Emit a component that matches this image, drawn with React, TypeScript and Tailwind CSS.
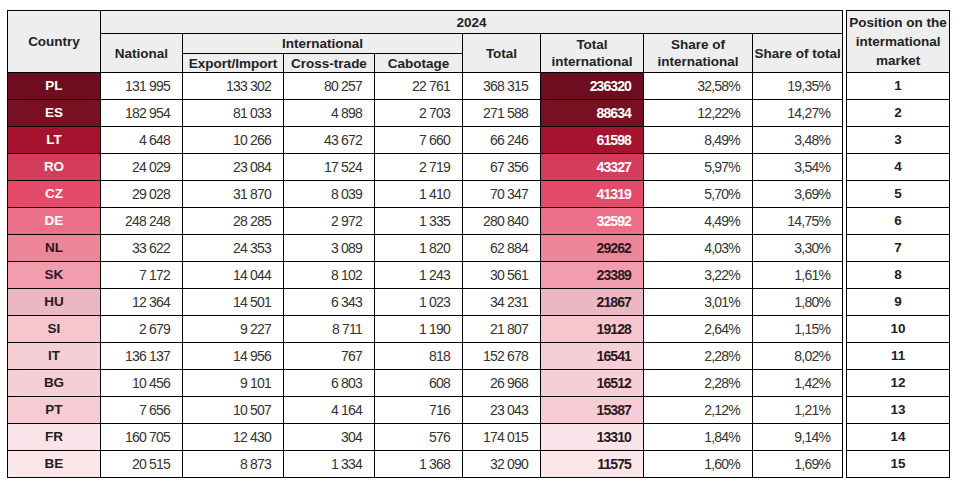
import React from "react";

type Row = {
  c: string;
  nat: string;
  exp: string;
  cross: string;
  cab: string;
  total: string;
  intl: string;
  shareIntl: string;
  shareTotal: string;
  bg: string;
  fg: string;
};

const rows: Row[] = [
  { c: "PL", nat: "131 995", exp: "133 302", cross: "80 257", cab: "22 761", total: "368 315", intl: "236320", shareIntl: "32,58%", shareTotal: "19,35%", bg: "bg-[#6d0d1f]", fg: "text-white" },
  { c: "ES", nat: "182 954", exp: "81 033", cross: "4 898", cab: "2 703", total: "271 588", intl: "88634", shareIntl: "12,22%", shareTotal: "14,27%", bg: "bg-[#780f22]", fg: "text-white" },
  { c: "LT", nat: "4 648", exp: "10 266", cross: "43 672", cab: "7 660", total: "66 246", intl: "61598", shareIntl: "8,49%", shareTotal: "3,48%", bg: "bg-[#a6132f]", fg: "text-white" },
  { c: "RO", nat: "24 029", exp: "23 084", cross: "17 524", cab: "2 719", total: "67 356", intl: "43327", shareIntl: "5,97%", shareTotal: "3,54%", bg: "bg-[#d33d5b]", fg: "text-white" },
  { c: "CZ", nat: "29 028", exp: "31 870", cross: "8 039", cab: "1 410", total: "70 347", intl: "41319", shareIntl: "5,70%", shareTotal: "3,69%", bg: "bg-[#e54b69]", fg: "text-white" },
  { c: "DE", nat: "248 248", exp: "28 285", cross: "2 972", cab: "1 335", total: "280 840", intl: "32592", shareIntl: "4,49%", shareTotal: "14,75%", bg: "bg-[#ec6f88]", fg: "text-white" },
  { c: "NL", nat: "33 622", exp: "24 353", cross: "3 089", cab: "1 820", total: "62 884", intl: "29262", shareIntl: "4,03%", shareTotal: "3,30%", bg: "bg-[#ee8699]", fg: "text-[#2a1a1e]" },
  { c: "SK", nat: "7 172", exp: "14 044", cross: "8 102", cab: "1 243", total: "30 561", intl: "23389", shareIntl: "3,22%", shareTotal: "1,61%", bg: "bg-[#f29cad]", fg: "text-[#2a1a1e]" },
  { c: "HU", nat: "12 364", exp: "14 501", cross: "6 343", cab: "1 023", total: "34 231", intl: "21867", shareIntl: "3,01%", shareTotal: "1,80%", bg: "bg-[#ebb7c2]", fg: "text-[#2a1a1e]" },
  { c: "SI", nat: "2 679", exp: "9 227", cross: "8 711", cab: "1 190", total: "21 807", intl: "19128", shareIntl: "2,64%", shareTotal: "1,15%", bg: "bg-[#f6c6cf]", fg: "text-[#2a1a1e]" },
  { c: "IT", nat: "136 137", exp: "14 956", cross: "767", cab: "818", total: "152 678", intl: "16541", shareIntl: "2,28%", shareTotal: "8,02%", bg: "bg-[#f6ced6]", fg: "text-[#2a1a1e]" },
  { c: "BG", nat: "10 456", exp: "9 101", cross: "6 803", cab: "608", total: "26 968", intl: "16512", shareIntl: "2,28%", shareTotal: "1,42%", bg: "bg-[#f6ced6]", fg: "text-[#2a1a1e]" },
  { c: "PT", nat: "7 656", exp: "10 507", cross: "4 164", cab: "716", total: "23 043", intl: "15387", shareIntl: "2,12%", shareTotal: "1,21%", bg: "bg-[#f5cbd4]", fg: "text-[#2a1a1e]" },
  { c: "FR", nat: "160 705", exp: "12 430", cross: "304", cab: "576", total: "174 015", intl: "13310", shareIntl: "1,84%", shareTotal: "9,14%", bg: "bg-[#fbe4e9]", fg: "text-[#2a1a1e]" },
  { c: "BE", nat: "20 515", exp: "8 873", cross: "1 334", cab: "1 368", total: "32 090", intl: "11575", shareIntl: "1,60%", shareTotal: "1,69%", bg: "bg-[#fbe6ea]", fg: "text-[#2a1a1e]" },
];

const head = "border border-black bg-[#eeeeee] text-[#222] font-bold text-[13.5px] leading-[17px] text-center align-middle p-0 whitespace-nowrap";
const num = "border border-black text-right pr-3 text-[14px] tracking-[-0.8px] text-[#333] whitespace-nowrap align-middle";

export default function App() {
  return (
    <div className="w-[961px] h-[492px] bg-white pl-[7px] pt-[10px] flex gap-[3px] items-start" style={{ fontFamily: '"Liberation Sans", Arial, sans-serif' }}>
      <table className="border-collapse table-fixed w-[835px] border border-black">
        <colgroup>
          <col className="w-[93px]" />
          <col className="w-[82px]" />
          <col className="w-[101px]" />
          <col className="w-[91px]" />
          <col className="w-[88px]" />
          <col className="w-[78px]" />
          <col className="w-[103px]" />
          <col className="w-[109px]" />
          <col className="w-[90px]" />
        </colgroup>
        <thead>
          <tr className="h-[23px]">
            <th rowSpan={3} className={head}>Country</th>
            <th colSpan={8} className={head}>2024</th>
          </tr>
          <tr className="h-[20px]">
            <th rowSpan={2} className={head}>National</th>
            <th colSpan={3} className={head}>International</th>
            <th rowSpan={2} className={head}>Total</th>
            <th rowSpan={2} className={head}>Total<br />international</th>
            <th rowSpan={2} className={head}>Share of<br />international</th>
            <th rowSpan={2} className={head}>Share of total</th>
          </tr>
          <tr className="h-[19px]">
            <th className={head}>Export/Import</th>
            <th className={head}>Cross-trade</th>
            <th className={head}>Cabotage</th>
          </tr>
        </thead>
        <tbody>
          {rows.map((r) => (
            <tr key={r.c} className="h-[27px]">
              <td className={`border border-black text-center font-bold text-[13.5px] ${r.bg} ${r.fg}`}>{r.c}</td>
              <td className={num}>{r.nat}</td>
              <td className={num}>{r.exp}</td>
              <td className={num}>{r.cross}</td>
              <td className={num}>{r.cab}</td>
              <td className={num}>{r.total}</td>
              <td className={`border border-black text-right pr-3 text-[14px] tracking-[-0.9px] font-bold align-middle ${r.bg} ${r.fg}`}>{r.intl}</td>
              <td className={num}>{r.shareIntl}</td>
              <td className={num}>{r.shareTotal}</td>
            </tr>
          ))}
        </tbody>
      </table>
      <table className="border-collapse table-fixed w-[104px] border border-black">
        <thead>
          <tr className="h-[62px]">
            <th className={`${head} leading-[19px]`}>Position on the<br />intermational<br />market</th>
          </tr>
        </thead>
        <tbody>
          {rows.map((r, i) => (
            <tr key={r.c} className="h-[27px]">
              <td className="border border-black text-center font-bold text-[13.5px] text-[#222] align-middle">{i + 1}</td>
            </tr>
          ))}
        </tbody>
      </table>
    </div>
  );
}
